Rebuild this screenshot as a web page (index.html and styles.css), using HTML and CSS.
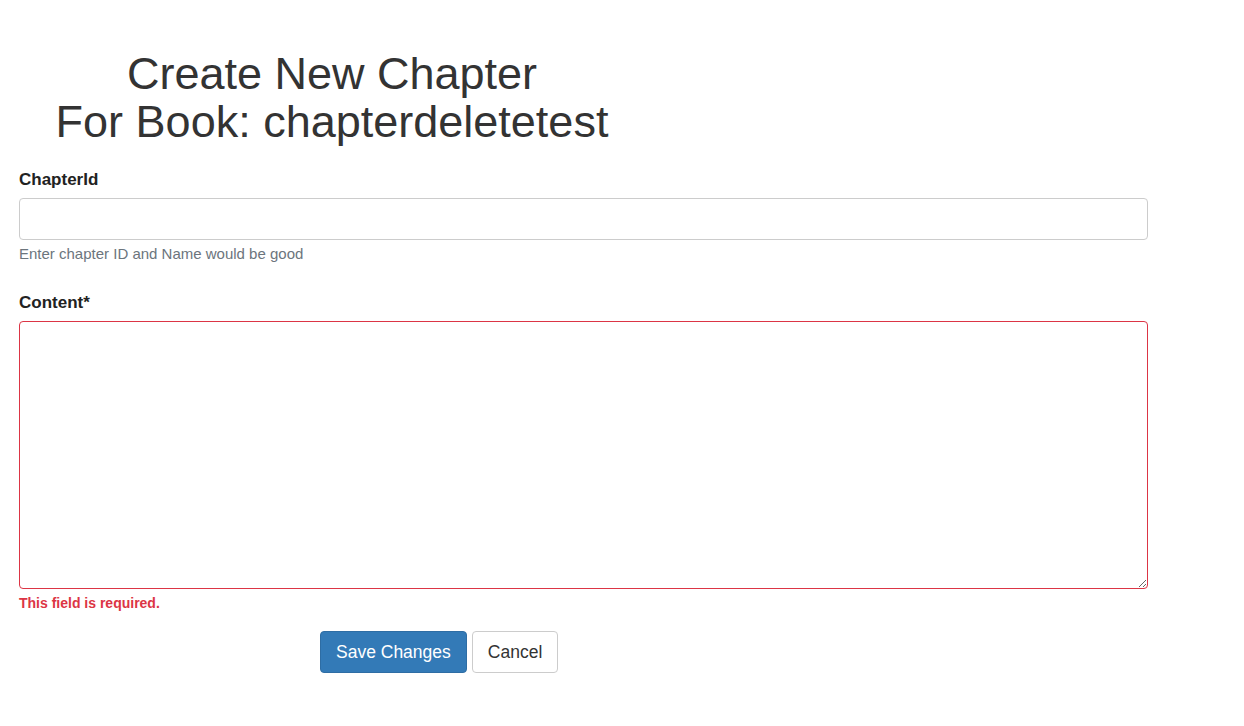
FILE: index.html
```html
<!DOCTYPE html>
<html>
<head>
<meta charset="utf-8">
<link rel="stylesheet" href="styles.css">
</head>
<body>
<div class="page">
  <div class="title-col">
    <h1 class="title">Create New Chapter<br>For Book: chapterdeletetest</h1>
  </div>
  <form class="form">
    <div class="group">
      <label class="label">ChapterId</label>
      <input class="input" type="text">
      <div class="help">Enter chapter ID and Name would be good</div>
    </div>
    <div class="group group-content">
      <label class="label">Content*</label>
      <textarea class="textarea invalid"></textarea>
      <div class="error">This field is required.</div>
    </div>
    <div class="actions">
      <button type="button" class="btn btn-primary">Save Changes</button>
      <button type="button" class="btn btn-default">Cancel</button>
    </div>
  </form>
</div>
</body>
</html>
```

FILE: styles.css
```css
* { box-sizing: border-box; }
html, body { margin: 0; padding: 0; background: #fff; }
body {
  font-family: "Liberation Sans", Arial, sans-serif;
  color: #333;
  font-size: 16px;
}
.page {
  padding: 50px 0 0 19px;
  width: 1148px;
}
.title-col {
  width: 626px;
  text-align: center;
}
.title {
  margin: 0;
  font-weight: 400;
  font-size: 45px;
  line-height: 48px;
  color: #333;
}
.form {
  margin-top: 24px;
}
.group {
  display: flex;
  flex-direction: column;
}
.label {
  font-weight: 700;
  font-size: 17px;
  line-height: 20px;
  color: #222;
  margin-bottom: 8px;
}
.input {
  height: 42px;
  border: 1px solid #ccc;
  border-radius: 4px;
  font: inherit;
  padding: 6px 12px;
}
.help {
  margin-top: 5px;
  font-size: 15px;
  line-height: 18px;
  color: #6c757d;
}
.group-content {
  margin-top: 30px;
}
.textarea {
  height: 268px;
  border: 1px solid #ccc;
  border-radius: 4px;
  font: inherit;
  padding: 6px 12px;
  resize: vertical;
}
.textarea.invalid { border-color: #dc3545; }
.error {
  margin-top: 5px;
  font-size: 14px;
  line-height: 18px;
  font-weight: 700;
  color: #dc3545;
}
.actions {
  display: flex;
  gap: 5px;
  margin-top: 19px;
  padding-left: 301px;
}
.btn {
  height: 42px;
  font-family: inherit;
  font-size: 17.5px;
  border-radius: 4px;
  padding: 0 15px;
  cursor: pointer;
}
.btn-primary {
  background: #337ab7;
  border: 1px solid #2e6da4;
  color: #fff;
}
.btn-default {
  background: #fff;
  border: 1px solid #ccc;
  color: #333;
}
```
